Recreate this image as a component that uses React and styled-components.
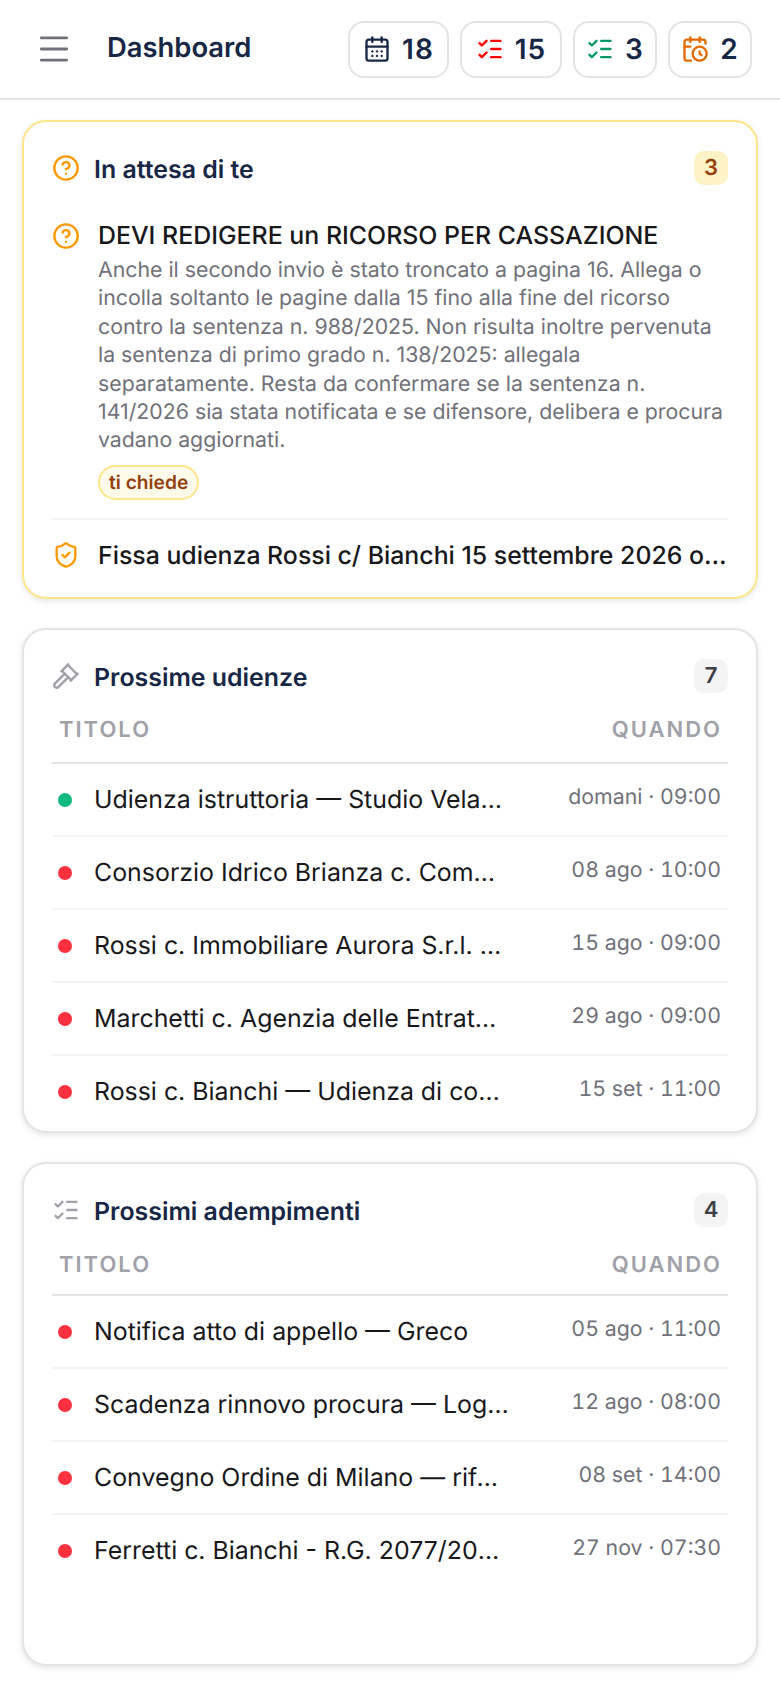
import React from 'react';
import styled, { createGlobalStyle } from 'styled-components';
import {
  CalendarClock,
  CalendarDays,
  CircleHelp,
  Gavel,
  ListChecks,
  Menu,
  ShieldCheck,
} from 'lucide-react';

const GlobalStyle = createGlobalStyle`
  html, body {
    margin: 0;
    padding: 0;
    background: #fff;
    font-family: Inter, "Liberation Sans", sans-serif;
    color: #18181b;
    text-rendering: geometricPrecision;
    -webkit-font-smoothing: antialiased;
  }
  * { box-sizing: border-box; }
`;

const Page = styled.div`
  width: 780px;
  height: 1688px;
  overflow: hidden;
`;

const TopBar = styled.header`
  display: flex;
  align-items: center;
  height: 100px;
  padding: 0 28px 0 35px;
  border-bottom: 2px solid #e4e4e7;
`;

const MenuButton = styled.div`
  display: flex;
  color: #71717a;
  margin-right: 34px;
`;

const PageTitle = styled.h1`
  flex: 1;
  margin: 0 0 4px;
  font-size: 27.4px;
  font-weight: 600;
  color: #172745;
`;

const Chips = styled.div`
  display: flex;
  gap: 11px;
`;

const Chip = styled.div`
  display: flex;
  align-items: center;
  justify-content: center;
  gap: 11px;
  height: 57px;
  width: ${(p) => p.$width}px;
  border: 2px solid #e4e4e7;
  border-radius: 16px;
  font-size: 28px;
  font-weight: 600;
  letter-spacing: 1px;
  color: #172745;
`;

const Content = styled.main`
  display: flex;
  flex-direction: column;
  gap: 29px;
  padding: 20px 22px 0;
`;

const Card = styled.section`
  height: ${(p) => p.$height}px;
  padding: 28px;
  border: 2px solid ${(p) => (p.$warn ? '#fde68a' : '#e4e4e7')};
  border-radius: 24px;
  background: #fff;
  box-shadow: 0 2px 6px rgba(0, 0, 0, 0.1);
`;

const CardHeader = styled.div`
  display: flex;
  align-items: center;
  height: 36px;
`;

const HeaderIcon = styled.span`
  display: flex;
  width: 42px;
  color: ${(p) => p.$color};
`;

const CardTitle = styled.h2`
  flex: 1;
  margin: 0;
  padding-top: 3px;
  font-size: 24.9px;
  font-weight: 600;
  color: #172745;
`;

const CountBadge = styled.span`
  display: flex;
  align-items: center;
  justify-content: center;
  width: 34px;
  height: 34px;
  border-radius: 10px;
  font-size: 22px;
  font-weight: 600;
  background: ${(p) => (p.$warn ? '#fef3c7' : '#f4f4f5')};
  color: ${(p) => (p.$warn ? '#92400e' : '#3f3f46')};
`;

const Request = styled.div`
  display: flex;
  margin-top: 31px;
  padding-bottom: 18px;
  border-bottom: 2px solid #f4f4f5;
`;

const RequestIcon = styled.span`
  display: flex;
  flex: none;
  width: 46px;
  padding-top: ${(p) => p.$top}px;
  color: ${(p) => p.$color};
`;

const RequestBody = styled.div`
  min-width: 0;
  flex: 1;
`;

const RequestTitle = styled.div`
  font-size: 24.9px;
  font-weight: 500;
  line-height: 39px;
  color: #18181b;
`;

const RequestText = styled.p`
  margin: 0 0 10px;
  font-size: 21.3px;
  line-height: 28.4px;
  color: #71717a;
`;

const Pill = styled.span`
  display: inline-block;
  padding: 0 9px;
  height: 35px;
  line-height: 31px;
  border: 2px solid #fde68a;
  border-radius: 18px;
  background: #fffbeb;
  color: #92400e;
  font-size: 19.2px;
  font-weight: 600;
`;

const PendingRow = styled.div`
  display: flex;
  align-items: center;
  height: 70px;
`;

const PendingText = styled.div`
  flex: 1;
  min-width: 0;
  overflow: hidden;
  white-space: nowrap;
  text-overflow: ellipsis;
  font-size: 24.85px;
  font-weight: 500;
  color: #18181b;
`;

const TableHead = styled.div`
  display: flex;
  justify-content: space-between;
  align-items: center;
  height: ${(p) => p.$height}px;
  padding: ${(p) => p.$offset}px 6px 0 7px;
  border-bottom: 2px solid #e4e4e7;
  font-size: 22px;
  font-weight: 600;
  letter-spacing: 2px;
  color: #a1a1aa;
`;

const Row = styled.div`
  display: flex;
  align-items: center;
  height: 73px;
  border-bottom: 2px solid ${(p) => (p.$last ? 'transparent' : '#f4f4f5')};
`;

const Dot = styled.span`
  flex: none;
  width: 14px;
  height: 14px;
  margin: 0 22px 0 6px;
  border-radius: 50%;
  background: ${(p) => p.$color};
`;

const RowTitle = styled.span`
  width: 415.4px;
  flex: none;
  overflow: hidden;
  white-space: nowrap;
  text-overflow: ellipsis;
  font-size: 24.9px;
  color: #18181b;
`;

const RowWhen = styled.span`
  flex: 1;
  margin: -6px 7px 0 0;
  text-align: right;
  white-space: nowrap;
  font-size: 21.3px;
  font-variant-numeric: tabular-nums;
  color: #71717a;
`;

const hearings = [
  { color: '#10b981', title: 'Udienza istruttoria — Studio Velasco', when: 'domani · 09:00' },
  { color: '#ff3040', title: 'Consorzio Idrico Brianza c. Comune di Monza', when: '08 ago · 10:00' },
  { color: '#ff3040', title: 'Rossi c. Immobiliare Aurora S.r.l. — Udienza', when: '15 ago · 09:00' },
  { color: '#ff3040', title: 'Marchetti c. Agenzia delle Entrate — Udienza', when: '29 ago · 09:00' },
  { color: '#ff3040', title: 'Rossi c. Bianchi — Udienza di comparizione', when: '15 set · 11:00' },
];

const duties = [
  { color: '#ff3040', title: 'Notifica atto di appello — Greco', when: '05 ago · 11:00' },
  { color: '#ff3040', title: 'Scadenza rinnovo procura — Logistica Nord', when: '12 ago · 08:00' },
  { color: '#ff3040', title: 'Convegno Ordine di Milano — riforma', when: '08 set · 14:00' },
  { color: '#ff3040', title: 'Ferretti c. Bianchi - R.G. 2077/2025 memoria', when: '27 nov · 07:30' },
];

const ListCard = ({ icon, title, count, items, height, headHeight, headOffset }) => (
  <Card $height={height}>
    <CardHeader>
      <HeaderIcon $color="#a1a1aa">{icon}</HeaderIcon>
      <CardTitle>{title}</CardTitle>
      <CountBadge>{count}</CountBadge>
    </CardHeader>
    <TableHead $height={headHeight} $offset={headOffset}>
      <span>TITOLO</span>
      <span>QUANDO</span>
    </TableHead>
    {items.map((item, i) => (
      <Row key={item.title} $last={i === items.length - 1}>
        <Dot $color={item.color} />
        <RowTitle>{item.title}</RowTitle>
        <RowWhen>{item.when}</RowWhen>
      </Row>
    ))}
  </Card>
);

const App = () => {
  return (
    <Page>
      <GlobalStyle />
      <TopBar>
        <MenuButton>
          <Menu size={38} strokeWidth={1.8} />
        </MenuButton>
        <PageTitle>Dashboard</PageTitle>
        <Chips>
          <Chip $width={101}>
            <CalendarDays size={28} color="#172745" />
            18
          </Chip>
          <Chip $width={102}>
            <ListChecks size={28} color="#f00" />
            15
          </Chip>
          <Chip $width={84}>
            <ListChecks size={28} color="#059669" />3
          </Chip>
          <Chip $width={84}>
            <CalendarClock size={28} color="#e36b00" />2
          </Chip>
        </Chips>
      </TopBar>
      <Content>
        <Card $warn $height={479}>
          <CardHeader>
            <HeaderIcon $color="#fb9a00">
              <CircleHelp size={28} />
            </HeaderIcon>
            <CardTitle>In attesa di te</CardTitle>
            <CountBadge $warn>3</CountBadge>
          </CardHeader>
          <Request>
            <RequestIcon $color="#fb9a00" $top={5}>
              <CircleHelp size={28} />
            </RequestIcon>
            <RequestBody>
              <RequestTitle>DEVI REDIGERE un RICORSO PER CASSAZIONE</RequestTitle>
              <RequestText>
                Anche il secondo invio è stato troncato a pagina 16. Allega o incolla soltanto le
                pagine dalla 15 fino alla fine del ricorso contro la sentenza n. 988/2025. Non
                risulta inoltre pervenuta la sentenza di primo grado n. 138/2025: allegala
                separatamente. Resta da confermare se la sentenza n. 141/2026 sia stata notificata e
                se difensore, delibera e procura vadano aggiornati.
              </RequestText>
              <Pill>ti chiede</Pill>
            </RequestBody>
          </Request>
          <PendingRow>
            <RequestIcon $color="#fb9a00" $top={0}>
              <ShieldCheck size={28} />
            </RequestIcon>
            <PendingText>Fissa udienza Rossi c/ Bianchi 15 settembre 2026 ore 11:00</PendingText>
          </PendingRow>
        </Card>
        <ListCard
          icon={<Gavel size={28} />}
          title="Prossime udienze"
          count={7}
          items={hearings}
          height={505}
          headHeight={70}
          headOffset={4}
        />
        <ListCard
          icon={<ListChecks size={28} />}
          title="Prossimi adempimenti"
          count={4}
          items={duties}
          height={504}
          headHeight={68}
          headOffset={8}
        />
      </Content>
    </Page>
  );
};

export default App;
